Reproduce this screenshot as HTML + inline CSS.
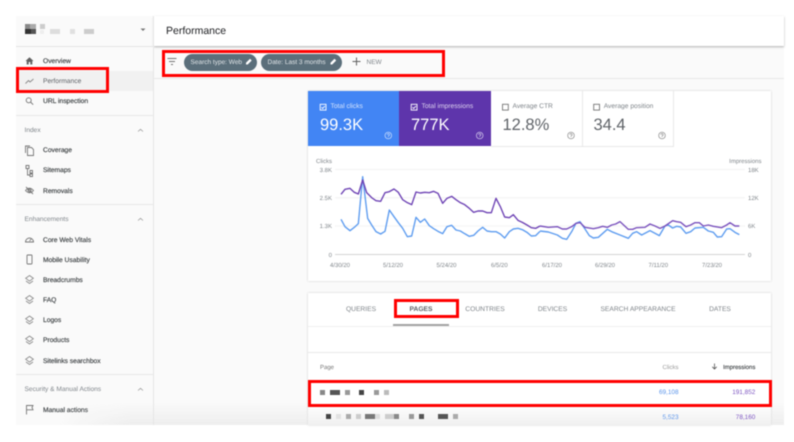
<!DOCTYPE html>
<html><head><meta charset="utf-8">
<style>
html,body{margin:0;padding:0;background:#fff;width:794px;height:442px;overflow:hidden}
#w{position:absolute;left:0;top:0;width:794px;height:442px;overflow:hidden;background:#fff;font-family:"Liberation Sans",sans-serif;filter:blur(.45px);text-rendering:geometricPrecision}
.a{position:absolute}
.t{position:absolute;height:10px;line-height:10px;white-space:nowrap;font-size:6.8px;color:#3c4043;margin-top:1px}
.n{left:43px;font-size:6.7px;-webkit-text-stroke:.15px #3c4043}
.s{left:24.5px;font-size:6.6px;color:#80868b}
.l{position:absolute;left:16px;width:137px;height:1px;background:#e8e8e8}
.g{position:absolute;font-size:6px;color:#80868b;height:8px;line-height:8px;white-space:nowrap;margin-top:1px}
.r{position:absolute;border:3px solid #f00;box-sizing:border-box}
.m{position:absolute;background:#555}
.tb{position:absolute;top:303.5px;height:10px;line-height:10px;font-size:6.7px;color:#80868b;transform:translateX(-50%);white-space:nowrap;margin-top:1px}
.v{position:absolute;font-size:16.5px;height:20px;line-height:20px;white-space:nowrap;margin-top:1px}
svg{position:absolute;overflow:visible}
</style></head><body><div id="w">
<div class="a" style="left:16px;top:16px;width:768px;height:409px;background:#fafafa"></div>
<div class="a" style="left:154px;top:16px;width:630px;height:30px;background:#fff;box-shadow:0 1px 2px rgba(0,0,0,.3)"></div>
<div class="a" style="left:153px;top:16px;width:1px;height:409px;background:#e6e6e6"></div>
<div class="a" style="left:16px;top:46px;width:137px;height:1px;background:#e4e4e4"></div>
<div class="a" style="left:154px;top:78px;width:630px;height:1px;background:#e8e8e8"></div>

<div class="m" style="left:25px;top:24px;width:5px;height:5px;background:#888"></div>
<div class="m" style="left:30px;top:24px;width:6px;height:5px;background:#aaa"></div>
<div class="m" style="left:25px;top:29px;width:6px;height:5px;background:#333"></div>
<div class="m" style="left:31px;top:29px;width:5px;height:5px;background:#555"></div>
<div class="m" style="left:40px;top:24px;width:5px;height:5px;background:#ccc"></div>
<div class="m" style="left:40px;top:30px;width:4px;height:4px;background:#eee"></div>
<div class="m" style="left:50px;top:29px;width:10px;height:5px;background:#ddd"></div>
<div class="m" style="left:70px;top:29px;width:5px;height:5px;background:#e0e0e0"></div>
<div class="m" style="left:84px;top:29px;width:10px;height:5px;background:#ccc"></div>
<svg style="left:0;top:0" width="794" height="442"><path d="M140.500 28.500h5l-2.500 2.500z" fill="#777"/></svg>

<div class="a" style="left:16px;top:71px;width:137px;height:20px;background:#f1f1f1"></div>

<div class="t n" style="top:55.500px">Overview</div>
<div class="t n" style="top:76px;color:#5f6368;-webkit-text-stroke:0">Performance</div>
<div class="t n" style="top:96px">URL inspection</div>
<div class="l" style="top:115px"></div>
<div class="t s" style="top:124.500px">Index</div>
<div class="t n" style="top:145px">Coverage</div>
<div class="t n" style="top:165px">Sitemaps</div>
<div class="t n" style="top:185.500px">Removals</div>
<div class="l" style="top:204px"></div>
<div class="t s" style="top:214px">Enhancements</div>
<div class="t n" style="top:234.500px">Core Web Vitals</div>
<div class="t n" style="top:254.500px">Mobile Usability</div>
<div class="t n" style="top:274.500px">Breadcrumbs</div>
<div class="t n" style="top:294.500px">FAQ</div>
<div class="t n" style="top:315px">Logos</div>
<div class="t n" style="top:335px">Products</div>
<div class="t n" style="top:355.500px">Sitelinks searchbox</div>
<div class="l" style="top:374px"></div>
<div class="t s" style="top:384px">Security &amp; Manual Actions</div>
<div class="t n" style="top:404.500px">Manual actions</div>

<svg style="left:0;top:0" width="794" height="442" fill="none" stroke="#777" stroke-width=".9">
<path d="M25.500 61l4-3.800 4 3.800h-1.200v3.500h-2v-2.500h-1.600v2.500h-2V61z" fill="#616161" stroke="none"/>
<path d="M25.500 83.500l3-3 1.500 1.500 3.500-3" stroke="#888" stroke-width=".9"/>
<circle cx="28.700" cy="100.300" r="2.500"/><path d="M30.500 102l2.700 2.700"/>
<path d="M27.500 147.500h4l2 2v6h-6zM25.500 153v-7h4.500" />
<path d="M26 165.500h3v3h-3zM30 170.500h2.500v2.500H30zM30 174h2.500v2.500H30zM27.500 168.500v6.500h2.500"/>
<path d="M25.500 190.500q4-4.500 8 0q-4 4.500-8 0z"/><circle cx="29.500" cy="190.500" r="1.500"/><path d="M26 187l7 7"/>
<path d="M25.500 242a4 4 0 1 1 8 0zM29.500 241l1.700-2"/>
<rect x="27" y="255" width="5" height="9" rx=".6"/>
<g stroke="#8a8a8a"><path d="M29.500 275.500l3.800 2.800-3.800 2.800-3.800-2.800zM26 281l3.500 2.500 3.500-2.500"/>
<path d="M29.500 295.500l3.800 2.800-3.800 2.800-3.800-2.800zM26 301l3.500 2.500 3.500-2.500"/>
<path d="M29.500 316l3.800 2.800-3.800 2.800-3.800-2.800zM26 321.500l3.500 2.500 3.500-2.500"/>
<path d="M29.500 336l3.800 2.800-3.800 2.800-3.800-2.800zM26 341.500l3.500 2.500 3.500-2.500"/>
<path d="M29.500 356.500l3.800 2.800-3.800 2.800-3.800-2.800zM26 362l3.500 2.500 3.500-2.500"/></g>
<path d="M26.500 414.500v-9h6.500l-1 2 1 2.300h-6.500" />
<g stroke="#9e9e9e" stroke-width=".8"><path d="M138 131.500l2.500-2.200 2.500 2.200M138 220.500l2.500-2.200 2.500 2.200M138 390.500l2.500-2.200 2.500 2.200"/></g>
</svg>

<div class="t" style="left:166px;top:24.500px;font-size:10.500px;color:#202124">Performance</div>

<svg style="left:0;top:0" width="794" height="442" fill="none" stroke="#757575" stroke-width="1">
<path d="M167.500 58.500h9M169 61.500h6M171 64.500h2"/>
<path d="M748 334h9M749.500 337h6M751.500 340h2"/>
<path d="M356.500 57.500v8M352.500 61.500h8" stroke="#616161"/>
</svg>
<div class="a" style="left:184px;top:54px;width:73px;height:17px;border-radius:9px;background:#5b6f7b"></div>
<div class="a" style="left:261px;top:54px;width:81px;height:17px;border-radius:9px;background:#5b6f7b"></div>
<div class="t" style="left:190.500px;top:56.500px;font-size:6.5px;color:#dfe4e7">Search type: Web</div>
<div class="t" style="left:267.500px;top:56.500px;font-size:6.5px;color:#dfe4e7">Date: Last 3 months</div>
<svg style="left:0;top:0" width="794" height="442"><path d="M246 64.500v-1.700l4-4 1.700 1.700-4 4zM330.500 64.500v-1.700l4-4 1.700 1.700-4 4z" fill="#fff"/></svg>
<div class="t" style="left:366.500px;top:56.500px;font-size:6.5px;color:#80868b">NEW</div>

<!-- top card -->
<div class="a" style="left:308px;top:91px;width:463px;height:190px;background:#fff;box-shadow:0 0 2px rgba(0,0,0,.2)"></div>
<div class="a" style="left:308px;top:91px;width:91px;height:55px;background:#4285f4"></div>
<div class="a" style="left:399px;top:91px;width:92px;height:55px;background:#5e35ab"></div>
<div class="a" style="left:582px;top:91px;width:1px;height:55px;background:#e8e8e8"></div>
<div class="a" style="left:673px;top:91px;width:1px;height:55px;background:#e8e8e8"></div>
<div class="a" style="left:491px;top:146px;width:183px;height:1px;background:#e8e8e8"></div>

<svg style="left:0;top:0" width="794" height="442" fill="none" stroke-width=".9">
<g stroke="#fff"><rect x="320.200" y="104.300" width="5.800" height="5.800"/><path d="M321.500 107.300l1.200 1.200 2.200-2.400"/>
<rect x="411.200" y="104.300" width="5.800" height="5.800"/><path d="M412.500 107.300l1.200 1.200 2.200-2.400"/></g>
<g stroke="#757575"><rect x="502.500" y="104.300" width="5.800" height="5.800"/><rect x="593.700" y="104.300" width="5.800" height="5.800"/></g>
</svg>
<div class="t" style="left:330.500px;top:101px;font-size:6.7px;color:#d5e3fc">Total clicks</div>
<div class="t" style="left:421.500px;top:101px;font-size:6.7px;color:#ddd3ef">Total impressions</div>
<div class="t" style="left:512.500px;top:101px;font-size:6.7px;color:#80868b">Average CTR</div>
<div class="t" style="left:603.700px;top:101px;font-size:6.7px;color:#80868b">Average position</div>
<div class="v" style="left:320px;top:114px;color:#fff">99.3K</div>
<div class="v" style="left:411px;top:114px;color:#fff">777K</div>
<div class="v" style="left:502.500px;top:114px;color:#5f6368">12.8%</div>
<div class="v" style="left:593.500px;top:114px;color:#5f6368">34.4</div>
<svg style="left:0;top:0" width="794" height="442" fill="none" stroke-width=".7">
<g stroke="#cfe0fb"><circle cx="388.300" cy="135.500" r="3.300"/><path d="M387.200 134.700a1.100 1.100 0 1 1 1.600 1l-.5.500v.5M388.300 137.500v.3"/></g>
<g stroke="#d8cfee"><circle cx="479.700" cy="135.500" r="3.300"/><path d="M478.600 134.700a1.100 1.100 0 1 1 1.600 1l-.5.500v.5M479.700 137.500v.3"/></g>
<g stroke="#8a8a8a"><circle cx="571" cy="135.500" r="3.300"/><path d="M569.900 134.700a1.100 1.100 0 1 1 1.600 1l-.5.500v.5M571 137.500v.3"/>
<circle cx="662" cy="135.500" r="3.300"/><path d="M660.900 134.700a1.100 1.100 0 1 1 1.600 1l-.5.500v.5M662 137.500v.3"/></g>
</svg>

<!-- chart -->
<svg style="left:0;top:0" width="794" height="442" fill="none">
<path d="M335 169.500H745M335 197.800H745M335 226H745" stroke="#f3f3f3" stroke-width="1"/>
<path d="M335 254.500H745" stroke="#d5d5d5" stroke-width="1"/>
<g transform="translate(300,150) scale(.33333)" stroke-width="4.200" stroke-linejoin="round">
<path stroke="#5f9df0" d="M123 208L135 230 150 242 163 232 175 221 188 80 203 205 215 225 228 245 242 252 255 244 268 180 282 200 295 218 308 235 322 260 335 258 348 202 361 217 374 207 388 227 401 236 414 244 428 251 441 230 455 226 468 240 481 243 494 251 508 259 521 256 534 243 548 232 561 243 574 245 588 245 601 252 614 264 628 245 640 237 654 235 667 239 681 247 694 258 707 257 720 244"/>
<path stroke="#6f45b5" d="M123 133L135 118 150 115 163 127 175 132 188 90 200 128 215 143 228 152 242 154 255 128 268 125 282 117 295 127 308 149 322 158 335 164 348 126 361 129 374 127 388 128 401 124 414 130 428 160 441 145 455 139 468 149 481 158 494 164 508 175 521 187 534 183 548 183 561 188 574 188 588 145 601 170 614 201 628 203 640 194 654 211 667 217 681 225 694 233 707 235 720 228"/>
</g>
<g transform="translate(530,150) scale(.33333)" stroke-width="4.200" stroke-linejoin="round">
<path stroke="#5f9df0" d="M30 243L55 246 82 255 97 265 110 268 125 245 138 220 150 215 165 237 178 257 190 264 205 262 232 238 245 245 270 255 295 265 308 250 320 245 335 255 360 242 388 257 405 228 415 225 428 234 440 229 452 231 468 250 482 245 495 234 520 232 535 243 550 247 562 261 575 260 590 237 600 236 615 247 628 254"/>
<path stroke="#7a52bd" d="M30 228L55 232 82 230 97 237 110 237 125 230 138 220 150 218 165 232 190 236 205 233 218 229 232 232 245 225 257 222 270 215 295 238 308 238 320 233 345 232 360 222 375 228 390 235 405 228 428 212 440 215 452 217 468 230 482 225 495 218 508 218 520 228 535 225 550 229 575 233 590 225 600 218 615 228 628 228"/>
</g>
</svg>
<div class="g" style="left:316px;top:157px">Clicks</div>
<div class="g" style="right:32.500px;top:157px">Impressions</div>
<div class="g" style="right:462px;top:165.500px">3.8K</div>
<div class="g" style="right:462px;top:193.500px">2.5K</div>
<div class="g" style="right:462px;top:222px">1.3K</div>
<div class="g" style="right:462px;top:250.500px">0</div>
<div class="g" style="left:748px;top:165.500px">18K</div>
<div class="g" style="left:748px;top:193.500px">12K</div>
<div class="g" style="left:748px;top:222px">6K</div>
<div class="g" style="left:748px;top:250.500px">0</div>
<div class="g" style="left:330px;top:261px">4/30/20</div>
<div class="g" style="left:383px;top:261px">5/12/20</div>
<div class="g" style="left:436.500px;top:261px">5/24/20</div>
<div class="g" style="left:491px;top:261px">6/5/20</div>
<div class="g" style="left:542px;top:261px">6/17/20</div>
<div class="g" style="left:595px;top:261px">6/29/20</div>
<div class="g" style="left:648.500px;top:261px">7/11/20</div>
<div class="g" style="left:702px;top:261px">7/23/20</div>

<!-- bottom card -->
<div class="a" style="left:308px;top:293px;width:463px;height:132px;background:#fff;box-shadow:0 0 2px rgba(0,0,0,.2)"></div>
<div class="a" style="left:308px;top:326px;width:463px;height:1px;background:#f0f0f0"></div>
<div class="a" style="left:308px;top:352px;width:463px;height:1px;background:#e8e8e8"></div>
<div class="a" style="left:393px;top:324px;width:56px;height:2px;background:#a3a3a3"></div>
<div class="tb" style="left:361px">QUERIES</div>
<div class="tb" style="left:421px;color:#5f6368;font-weight:bold">PAGES</div>
<div class="tb" style="left:485px">COUNTRIES</div>
<div class="tb" style="left:552.500px">DEVICES</div>
<div class="tb" style="left:638px">SEARCH APPEARANCE</div>
<div class="tb" style="left:720px">DATES</div>
<div class="g" style="left:320px;top:363px;color:#757575">Page</div>
<div class="g" style="right:115.500px;top:363px;color:#9a9a9a">Clicks</div>
<div class="g" style="right:38.700px;top:363px;color:#3c4043;-webkit-text-stroke:.12px #3c4043">Impressions</div>
<svg style="left:0;top:0" width="794" height="442" fill="none" stroke="#555" stroke-width=".8"><path d="M714.500 363.500v5.500M712.300 366.800l2.200 2.200 2.200-2.200"/></svg>

<div class="a" style="left:60px;top:403px;width:724px;height:22px;background:linear-gradient(rgba(228,228,228,0),rgba(228,228,228,.55));-webkit-mask-image:linear-gradient(90deg,transparent,#000 70px);mask-image:linear-gradient(90deg,transparent,#000 70px)"></div>

<div class="g" style="right:115.500px;top:388px;font-size:6.4px;color:#5b95ea">69,108</div>
<div class="g" style="right:38.700px;top:388px;font-size:6.4px;color:#7e57c2">191,852</div>
<div class="g" style="right:115.500px;top:412.500px;font-size:6.4px;color:#5b95ea">5,523</div>
<div class="g" style="right:38.700px;top:412.500px;font-size:6.4px;color:#7e57c2">78,160</div>

<div class="m" style="left:320px;top:390px;width:5px;height:5px;background:#888"></div>
<div class="m" style="left:330px;top:390px;width:10px;height:5px;background:#555"></div>
<div class="m" style="left:345px;top:390px;width:5px;height:5px;background:#999"></div>
<div class="m" style="left:359px;top:390px;width:5px;height:5px;background:#444"></div>
<div class="m" style="left:374px;top:390px;width:5px;height:5px;background:#999"></div>
<div class="m" style="left:384px;top:390px;width:5px;height:5px;background:#bbb"></div>

<div class="m" style="left:326px;top:413.500px;width:5px;height:5px;background:#444"></div>
<div class="m" style="left:336px;top:413.500px;width:5px;height:5px;background:#e2e2e2"></div>
<div class="m" style="left:346px;top:413.500px;width:5px;height:5px;background:#aaa"></div>
<div class="m" style="left:356px;top:413.500px;width:5px;height:5px;background:#ccc"></div>
<div class="m" style="left:365px;top:413.500px;width:10px;height:5px;background:#777"></div>
<div class="m" style="left:375px;top:413.500px;width:5px;height:5px;background:#ddd"></div>
<div class="m" style="left:385px;top:413.500px;width:10px;height:5px;background:#ccc"></div>
<div class="m" style="left:394px;top:413.500px;width:5px;height:5px;background:#888"></div>
<div class="m" style="left:409px;top:413.500px;width:5px;height:5px;background:#999"></div>
<div class="m" style="left:419px;top:413.500px;width:5px;height:5px;background:#555"></div>
<div class="m" style="left:438px;top:413.500px;width:10px;height:5px;background:#555"></div>
<div class="m" style="left:453px;top:413.500px;width:5px;height:5px;background:#aaa"></div>

<div class="r" style="left:16px;top:67px;width:93px;height:26px"></div>
<div class="r" style="left:162px;top:50px;width:283px;height:27px"></div>
<div class="r" style="left:394px;top:299px;width:65px;height:19px"></div>
<div class="r" style="left:308px;top:380px;width:464px;height:27px"></div>
</div></body></html>
